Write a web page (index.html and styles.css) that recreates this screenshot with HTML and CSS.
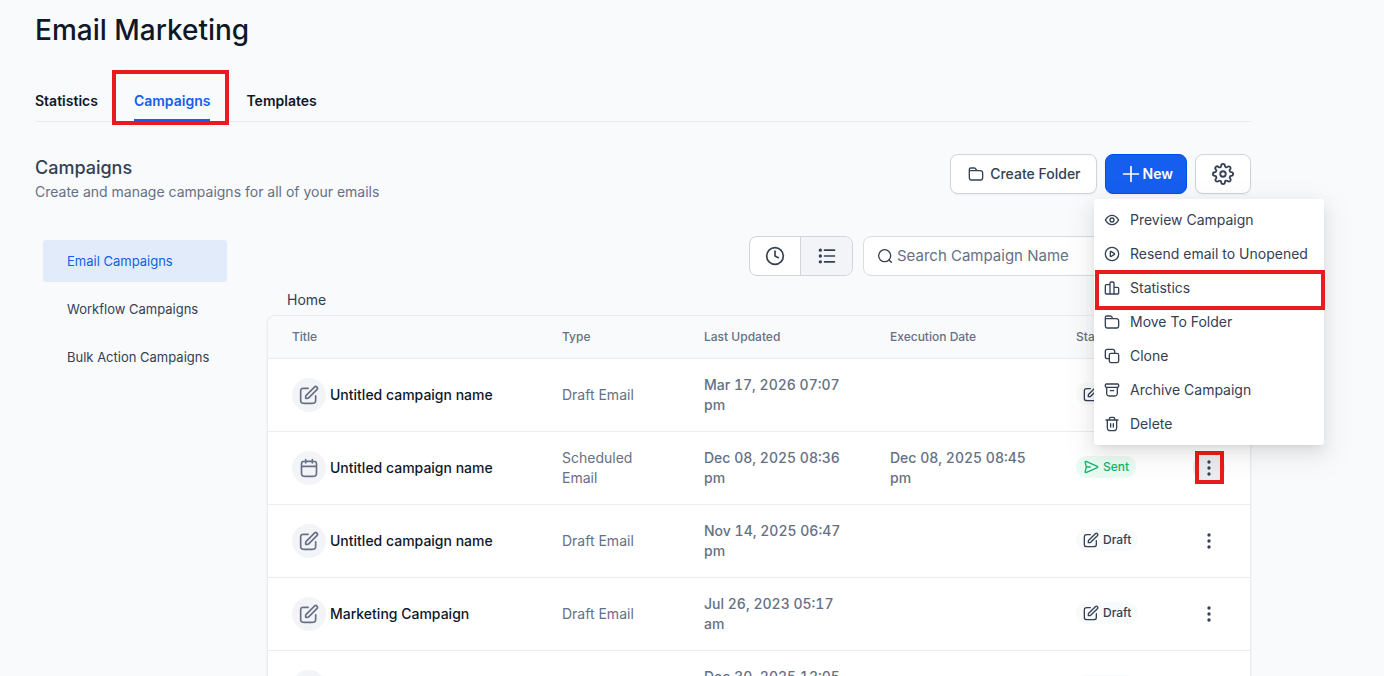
FILE: index.html
```html
<!DOCTYPE html>
<html lang="en">
<head>
    <meta charset="UTF-8">
    <meta name="viewport" content="width=device-width, initial-scale=1.0">
    <title>Email Marketing</title>
    <link rel="stylesheet" href="styles.css">
</head>
<body>
    <svg class="sprite" aria-hidden="true">
        <symbol id="edit" viewBox="0 0 24 24"><path d="M11 4H6.8c-1.68 0-2.52 0-3.162.327a3 3 0 0 0-1.311 1.311C2 6.28 2 7.12 2 8.8v8.4c0 1.68 0 2.52.327 3.162a3 3 0 0 0 1.311 1.311C4.28 22 5.12 22 6.8 22h8.4c1.68 0 2.52 0 3.162-.327a3 3 0 0 0 1.311-1.311C20 19.72 20 18.88 20 17.2V13M8 16h1.675c.489 0 .733 0 .963-.055a2 2 0 0 0 .579-.24c.201-.123.374-.296.72-.642L21.5 5.5a2.121 2.121 0 0 0-3-3l-9.563 9.563c-.346.346-.519.519-.642.72a2 2 0 0 0-.24.579C8 13.592 8 13.836 8 14.325V16z"/></symbol>
        <symbol id="calendar" viewBox="0 0 24 24"><path d="M21 10H3m13-8v4M8 2v4m-.2 16h8.4c1.68 0 2.52 0 3.162-.327a3 3 0 0 0 1.311-1.311C21 19.72 21 18.88 21 17.2V8.8c0-1.68 0-2.52-.327-3.162a3 3 0 0 0-1.311-1.311C18.72 4 17.88 4 16.2 4H7.8c-1.68 0-2.52 0-3.162.327a3 3 0 0 0-1.311 1.311C3 6.28 3 7.12 3 8.8v8.4c0 1.68 0 2.52.327 3.162a3 3 0 0 0 1.311 1.311C5.28 22 6.12 22 7.8 22z"/></symbol>
        <symbol id="folder" viewBox="0 0 24 24"><path d="M13 7l-1.116-2.231c-.32-.642-.481-.963-.72-1.198a2 2 0 0 0-.748-.462C10.1 3 9.74 3 9.022 3H5.2c-1.12 0-1.68 0-2.108.218a2 2 0 0 0-.874.874C2 4.52 2 5.08 2 6.2V7m0 0h15.2c1.68 0 2.52 0 3.162.327a3 3 0 0 1 1.311 1.311C22 9.28 22 10.12 22 11.8v4.4c0 1.68 0 2.52-.327 3.162a3 3 0 0 1-1.311 1.311C19.72 21 18.88 21 17.2 21H6.8c-1.68 0-2.52 0-3.162-.327a3 3 0 0 1-1.311-1.311C2 18.72 2 17.88 2 16.2V7z"/></symbol>
        <symbol id="plus" viewBox="0 0 24 24"><path d="M12 3v18M3 12h18"/></symbol>
        <symbol id="gear" viewBox="0 0 24 24"><circle cx="12" cy="12" r="3"/><path d="M19.4 15a1.65 1.65 0 0 0 .33 1.82l.06.06a2 2 0 1 1-2.83 2.83l-.06-.06a1.65 1.65 0 0 0-1.82-.33 1.65 1.65 0 0 0-1 1.51V21a2 2 0 0 1-4 0v-.09A1.65 1.65 0 0 0 9 19.4a1.65 1.65 0 0 0-1.82.33l-.06.06a2 2 0 1 1-2.83-2.83l.06-.06a1.65 1.65 0 0 0 .33-1.82 1.65 1.65 0 0 0-1.51-1H3a2 2 0 0 1 0-4h.09A1.65 1.65 0 0 0 4.6 9a1.65 1.65 0 0 0-.33-1.82l-.06-.06a2 2 0 1 1 2.83-2.83l.06.06a1.65 1.65 0 0 0 1.82.33H9a1.65 1.65 0 0 0 1-1.51V3a2 2 0 0 1 4 0v.09a1.65 1.65 0 0 0 1 1.51 1.65 1.65 0 0 0 1.82-.33l.06-.06a2 2 0 1 1 2.83 2.83l-.06.06a1.65 1.65 0 0 0-.33 1.82V9a1.65 1.65 0 0 0 1.51 1H21a2 2 0 0 1 0 4h-.09a1.65 1.65 0 0 0-1.51 1z"/></symbol>
        <symbol id="clock" viewBox="0 0 24 24"><circle cx="12" cy="12" r="10"/><path d="M12 6v6l4 2"/></symbol>
        <symbol id="list" viewBox="0 0 24 24"><path d="M9 5h12M9 12h12M9 19h12"/><path d="M4 5h.01M4 12h.01M4 19h.01" stroke-width="4"/></symbol>
        <symbol id="search" viewBox="0 0 24 24"><circle cx="11.5" cy="11.5" r="9"/><path d="M21.5 21.500l-3.500-3.500"/></symbol>
        <symbol id="eye" viewBox="0 0 24 24"><path d="M2.42 12.713c-.136-.215-.204-.323-.242-.49a1.173 1.173 0 0 1 0-.446c.038-.167.106-.274.242-.49C3.546 9.505 6.895 5 12 5s8.455 4.505 9.58 6.287c.137.215.205.323.243.49.029.125.029.322 0 .446-.038.167-.106.274-.242.49C20.455 14.495 17.105 19 12 19s-8.455-4.505-9.58-6.287z"/><circle cx="12" cy="12" r="3"/></symbol>
        <symbol id="play" viewBox="0 0 24 24"><circle cx="12" cy="12" r="10"/><path d="M9.5 8.7v6.6c0 .6.5.8.9.6l5.2-3.3c.4-.3.4-.9 0-1.2l-5.2-3.3c-.4-.2-.9 0-.9.6z"/></symbol>
        <symbol id="chart" viewBox="0 0 24 24"><path d="M9 21H3.6C2.5 21 2 20.5 2 19.4V8.6C2 7.5 2.5 7 3.6 7H9m0 14h6m-6 0V4.6C9 3.5 9.5 3 10.6 3h2.8C14.5 3 15 3.5 15 4.6V21m0 0h5.4c1.1 0 1.6-.5 1.6-1.6v-6.8c0-1.1-.5-1.6-1.6-1.6H15"/></symbol>
        <symbol id="clone" viewBox="0 0 24 24"><rect x="8" y="8" width="14" height="14" rx="2.5"/><path d="M8 16H5c-2 0-3-1-3-3V5c0-2 1-3 3-3h8c2 0 3 1 3 3v3"/></symbol>
        <symbol id="archive" viewBox="0 0 24 24"><rect x="2" y="3" width="20" height="5" rx="1.5"/><path d="M4 8v8.2c0 3.8 1 4.8 4.8 4.8h6.4c3.8 0 4.8-1 4.8-4.8V8M9.5 13h5"/></symbol>
        <symbol id="trash" viewBox="0 0 24 24"><path d="M16 6V4.5C16 2.7 15.3 2 13.5 2h-3C8.7 2 8 2.7 8 4.5V6M3 6h18M5 6v11.2C5 21 6 22 9.8 22h4.4c3.8 0 4.8-1 4.8-4.8V6M10 11.5v5M14 11.5v5"/></symbol>
        <symbol id="send" viewBox="0 0 24 24"><path d="M5 12h6M4.5 3.6l17 7.6c.8.4.8 1.2 0 1.6l-17 7.6c-.8.3-1.5-.3-1.2-1.2L5 12 3.300 4.800c-.3-.9.4-1.5 1.2-1.2z"/></symbol>
        <symbol id="dots" viewBox="0 0 24 24"><path d="M12 3h.01M12 12h.01M12 21h.01" stroke-width="5"/></symbol>
    </svg>

    <header class="page-header">
        <h1>Email Marketing</h1>
        <nav class="tabs">
            <a href="#">Statistics</a>
            <a href="#" class="active">Campaigns<span class="mark mark-tab"></span></a>
            <a href="#">Templates</a>
        </nav>
    </header>

    <section class="section-head">
        <div class="section-title">
            <h2>Campaigns</h2>
            <p>Create and manage campaigns for all of your emails</p>
        </div>
        <div class="actions">
            <button class="btn"><svg class="icon icon-sm"><use href="#folder"/></svg>Create Folder</button>
            <button class="btn btn-primary"><svg class="icon icon-md"><use href="#plus"/></svg>New</button>
            <button class="btn" aria-label="Settings"><svg class="icon icon-lg"><use href="#gear"/></svg></button>
        </div>
    </section>

    <div class="content">
        <nav class="sidebar">
            <a href="#" class="active">Email Campaigns</a>
            <a href="#">Workflow Campaigns</a>
            <a href="#">Bulk Action Campaigns</a>
        </nav>
        <main>
            <div class="toolbar">
                <div class="toggle">
                    <button aria-label="Recent"><svg class="icon icon-md"><use href="#clock"/></svg></button>
                    <button class="on" aria-label="List"><svg class="icon icon-md"><use href="#list"/></svg></button>
                </div>
                <label class="search">
                    <svg class="icon icon-sm"><use href="#search"/></svg>
                    <input type="text" placeholder="Search Campaign Name" aria-label="Search Campaign Name">
                </label>
            </div>
            <a href="#" class="crumb">Home</a>
            <table>
                <colgroup>
                    <col>
                    <col class="col-type">
                    <col class="col-date">
                    <col class="col-date">
                    <col class="col-status">
                    <col class="col-menu">
                </colgroup>
                <thead>
                    <tr>
                        <th>Title</th>
                        <th>Type</th>
                        <th>Last Updated</th>
                        <th>Execution Date</th>
                        <th>Status</th>
                        <th></th>
                    </tr>
                </thead>
                <tbody>
                    <tr>
                        <td><div class="name"><span class="avatar"><svg class="icon icon-md"><use href="#edit"/></svg></span>Untitled campaign name</div></td>
                        <td>Draft Email</td>
                        <td class="date">Mar 17, 2026 07:07 pm</td>
                        <td class="date"></td>
                        <td><span class="badge"><svg class="icon icon-sm"><use href="#edit"/></svg>Draft</span></td>
                        <td><button class="more" aria-label="More"><svg class="icon icon-sm"><use href="#dots"/></svg></button></td>
                    </tr>
                    <tr>
                        <td><div class="name"><span class="avatar"><svg class="icon icon-md"><use href="#calendar"/></svg></span>Untitled campaign name</div></td>
                        <td>Scheduled Email</td>
                        <td class="date">Dec 08, 2025 08:36 pm</td>
                        <td class="date">Dec 08, 2025 08:45 pm</td>
                        <td><span class="badge sent"><svg class="icon icon-sm"><use href="#send"/></svg>Sent</span></td>
                        <td>
                            <div class="dropdown">
                                <button class="more open" aria-label="More"><svg class="icon icon-sm"><use href="#dots"/></svg></button>
                                <span class="mark mark-more"></span>
                                <div class="menu">
                                    <button><svg class="icon icon-sm"><use href="#eye"/></svg>Preview Campaign</button>
                                    <button><svg class="icon icon-sm"><use href="#play"/></svg>Resend email to Unopened</button>
                                    <button><svg class="icon icon-sm"><use href="#chart"/></svg>Statistics<span class="mark mark-item"></span></button>
                                    <button><svg class="icon icon-sm"><use href="#folder"/></svg>Move To Folder</button>
                                    <button><svg class="icon icon-sm"><use href="#clone"/></svg>Clone</button>
                                    <button><svg class="icon icon-sm"><use href="#archive"/></svg>Archive Campaign</button>
                                    <button><svg class="icon icon-sm"><use href="#trash"/></svg>Delete</button>
                                </div>
                            </div>
                        </td>
                    </tr>
                    <tr>
                        <td><div class="name"><span class="avatar"><svg class="icon icon-md"><use href="#edit"/></svg></span>Untitled campaign name</div></td>
                        <td>Draft Email</td>
                        <td class="date">Nov 14, 2025 06:47 pm</td>
                        <td class="date"></td>
                        <td><span class="badge"><svg class="icon icon-sm"><use href="#edit"/></svg>Draft</span></td>
                        <td><button class="more" aria-label="More"><svg class="icon icon-sm"><use href="#dots"/></svg></button></td>
                    </tr>
                    <tr>
                        <td><div class="name"><span class="avatar"><svg class="icon icon-md"><use href="#edit"/></svg></span>Marketing Campaign</div></td>
                        <td>Draft Email</td>
                        <td class="date">Jul 26, 2023 05:17 am</td>
                        <td class="date"></td>
                        <td><span class="badge"><svg class="icon icon-sm"><use href="#edit"/></svg>Draft</span></td>
                        <td><button class="more" aria-label="More"><svg class="icon icon-sm"><use href="#dots"/></svg></button></td>
                    </tr>
                    <tr>
                        <td><div class="name"><span class="avatar"><svg class="icon icon-md"><use href="#edit"/></svg></span>Untitled campaign name</div></td>
                        <td>Draft Email</td>
                        <td class="date">Dec 30, 2025 12:05 pm</td>
                        <td class="date"></td>
                        <td><span class="badge"><svg class="icon icon-sm"><use href="#edit"/></svg>Draft</span></td>
                        <td><button class="more" aria-label="More"><svg class="icon icon-sm"><use href="#dots"/></svg></button></td>
                    </tr>
                </tbody>
            </table>
        </main>
    </div>
</body>
</html>
```
FILE: styles.css
```css
*{
    box-sizing: border-box;
    margin: 0;
    padding: 0;
}
body{
    height: 100vh;
    overflow: hidden;
    padding: 10px 133px 0 35px;
    background-color: #f9fafc;
    color: #344054;
    font-family: Inter, "Liberation Sans", sans-serif;
    font-size: 14px;
    line-height: 20px;
}
a{
    color: inherit;
    text-decoration: none;
}
button, input{
    font: inherit;
    color: inherit;
}
button{
    border: none;
    background: none;
    cursor: pointer;
}
.sprite{
    display: none;
}
.icon{
    flex: none;
    fill: none;
    stroke: currentColor;
    stroke-width: 2;
    stroke-linecap: round;
    stroke-linejoin: round;
}
.icon-sm{
    width: 16px;
    height: 16px;
}
.icon-md{
    width: 20px;
    height: 20px;
}
.icon-lg{
    width: 22px;
    height: 22px;
}

/* header */
h1{
    color: #101828;
    font-size: 28px;
    font-weight: 500;
    line-height: 40px;
}
.tabs{
    display: flex;
    gap: 36px;
    margin-top: 32px;
    border-bottom: 1px solid #eaecf0;
    color: #101828;
    font-weight: 600;
}
.tabs a{
    position: relative;
    padding: 9px 0 8px;
    border-bottom: 2px solid transparent;
}
.tabs .active{
    color: #155eef;
    border-color: #155eef;
}

/* title row */
.section-head{
    display: flex;
    justify-content: space-between;
    align-items: flex-start;
    margin-top: 32px;
}
h2{
    font-size: 18px;
    font-weight: 500;
    line-height: 28px;
}
.section-title p{
    color: #667085;
}
.actions{
    display: flex;
    gap: 8px;
}
.btn{
    display: flex;
    align-items: center;
    justify-content: center;
    gap: 6px;
    height: 40px;
    padding: 0 15px 0 17px;
    border: 1px solid #d0d5dd;
    border-radius: 8px;
    background-color: white;
    font-weight: 500;
    box-shadow: 0 1px 2px rgba(16, 24, 40, 0.05);
}
.btn:last-child{
    padding: 0 16px;
}
.btn-primary{
    gap: 2px;
    padding: 0 13px 0 15px;
    border-color: #004eeb;
    background-color: #155eef;
    color: white;
    font-weight: 600;
}

/* content */
.content{
    display: flex;
    gap: 40px;
    margin-top: 34px;
}
.sidebar{
    display: flex;
    flex-direction: column;
    flex: none;
    gap: 6px;
    width: 192px;
    padding: 4px 0 0 8px;
    font-size: 13px;
    white-space: nowrap;
}
.sidebar a{
    padding: 11px 24px;
    border-radius: 3px;
}
.sidebar .active{
    background-color: #e1ebfa;
    color: #155eef;
}
main{
    flex: 1;
    min-width: 0;
}
.toolbar{
    display: flex;
    justify-content: flex-end;
    gap: 10px;
}
.toggle{
    display: flex;
    height: 40px;
    border: 1px solid #d0d5dd;
    border-radius: 8px;
    background-color: white;
    overflow: hidden;
}
.toggle button{
    display: flex;
    align-items: center;
    justify-content: center;
    width: 50px;
}
.toggle .on{
    width: 52px;
    border-left: 1px solid #d0d5dd;
    background-color: #f2f4f7;
}
.search{
    display: flex;
    align-items: center;
    gap: 4px;
    width: 388px;
    height: 40px;
    padding: 0 13px;
    border: 1px solid #d9dce3;
    border-radius: 8px;
    background-color: white;
}
.search input{
    flex: 1;
    border: none;
    outline: none;
    background: none;
    font-size: 15px;
}
.search input::placeholder{
    color: #667085;
}
.crumb{
    display: block;
    width: fit-content;
    padding: 14px 20px 5px;
}

/* table */
table{
    width: 100%;
    table-layout: fixed;
    border: 1px solid #eaecf0;
    border-radius: 8px;
    border-spacing: 0;
    background-color: white;
    box-shadow: 0 1px 2px rgba(16, 24, 40, 0.1);
}
.col-type{
    width: 142px;
}
.col-date{
    width: 186px;
}
.col-status{
    width: 125px;
}
.col-menu{
    width: 73px;
}
th{
    height: 43px;
    padding: 0 24px;
    border-bottom: 1px solid #eaecf0;
    background-color: #f9fafb;
    color: #667085;
    font-size: 12px;
    font-weight: 500;
    text-align: left;
}
th:first-child{
    border-top-left-radius: 8px;
}
th:last-child{
    border-top-right-radius: 8px;
}
td{
    height: 73px;
    padding: 0 24px;
    border-bottom: 1px solid #eaecf0;
    color: #667085;
}
.date{
    font-variant-numeric: tabular-nums;
    font-weight: 500;
}
.name{
    display: flex;
    align-items: center;
    gap: 4px;
    color: #101828;
    font-weight: 500;
    white-space: nowrap;
}
.avatar{
    display: flex;
    align-items: center;
    justify-content: center;
    width: 34px;
    height: 34px;
    border-radius: 50%;
    background-color: #f2f4f7;
    color: #667085;
}
.badge{
    display: inline-flex;
    align-items: center;
    gap: 4px;
    height: 22px;
    padding: 0 7px;
    border-radius: 11px;
    background-color: #f9fafb;
    color: #344054;
    font-size: 12px;
    font-weight: 500;
}
.sent{
    background-color: #e9fbf2;
    color: #12b76a;
}
.more{
    display: flex;
    align-items: center;
    justify-content: center;
    width: 32px;
    height: 32px;
    border-radius: 50%;
    color: #344054;
}
td .more{
    margin: 0 -8px;
}
.open{
    background-color: #eaecf0;
}

/* row menu */
.dropdown{
    position: relative;
    width: 16px;
}
.menu{
    position: absolute;
    bottom: 39px;
    left: -107px;
    width: 230px;
    padding: 4px 0;
    border-radius: 3px;
    background-color: white;
    box-shadow: 0 3px 6px -4px rgba(0, 0, 0, 0.12), 0 6px 16px rgba(0, 0, 0, 0.08), 0 9px 28px 8px rgba(0, 0, 0, 0.05);
    z-index: 1;
}
.menu button{
    position: relative;
    display: flex;
    align-items: center;
    gap: 10px;
    width: 100%;
    height: 34px;
    padding: 0 10px;
    color: #344054;
    white-space: nowrap;
}

/* red highlight frames */
.mark{
    position: absolute;
    border: 4px solid #e81c1c;
    pointer-events: none;
}
.mark-tab{
    inset: -12px -19px -6px -22px;
}
.mark-item{
    inset: -1px -1px -5px 1px;
}
.mark-more{
    inset: -1px -7px 0 -6px;
}
```
